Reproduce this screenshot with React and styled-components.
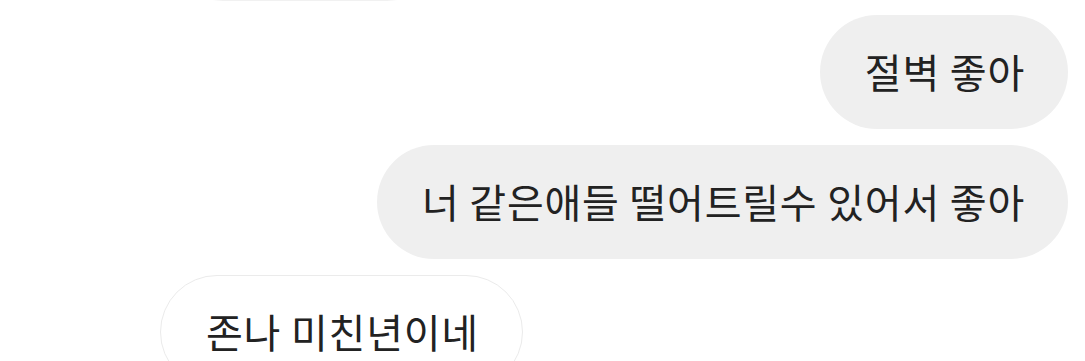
import styled, { createGlobalStyle } from "styled-components";

const GlobalStyle = createGlobalStyle`
  html, body {
    margin: 0;
    padding: 0;
    background: #ffffff;
    overflow: hidden;
  }
`;

const Thread = styled.div`
  width: 1085px;
  height: 361px;
  overflow: hidden;
  display: flex;
  flex-direction: column;
  gap: 16px;
  padding: 0 17px 0 0;
  box-sizing: border-box;
  font-family: "Noto Sans CJK KR", "Noto Sans", sans-serif;
`;

const Row = styled.div`
  display: flex;
  flex-shrink: 0;
  justify-content: ${(p) => (p.$mine ? "flex-end" : "flex-start")};
  padding-left: ${(p) => p.$indent || 0}px;
  margin-top: ${(p) => p.$offset || 0}px;
`;

const Bubble = styled.div`
  height: 114px;
  box-sizing: border-box;
  border-radius: 57px;
  padding: 0 43px 3px 45px;
  display: flex;
  align-items: center;
  font-size: 40px;
  letter-spacing: 0.8px;
  color: #222222;
  white-space: nowrap;
  background: ${(p) => (p.$mine ? "#efefef" : "#ffffff")};
  border: ${(p) => (p.$mine ? "none" : "1.5px solid #ebebeb")};
`;

const Ghost = styled(Bubble)`
  width: 278px;
  border-color: #f1f1f1;
`;

export default function App() {
  return (
    <>
      <GlobalStyle />
      <Thread>
        <Row $indent={166} $offset={-113}>
          <Ghost />
        </Row>
        <Row $mine $offset={-2}>
          <Bubble $mine>절벽 좋아</Bubble>
        </Row>
        <Row $mine>
          <Bubble $mine>너 같은애들 떨어트릴수 있어서 좋아</Bubble>
        </Row>
        <Row $indent={160}>
          <Bubble>존나 미친년이네</Bubble>
        </Row>
      </Thread>
    </>
  );
}
